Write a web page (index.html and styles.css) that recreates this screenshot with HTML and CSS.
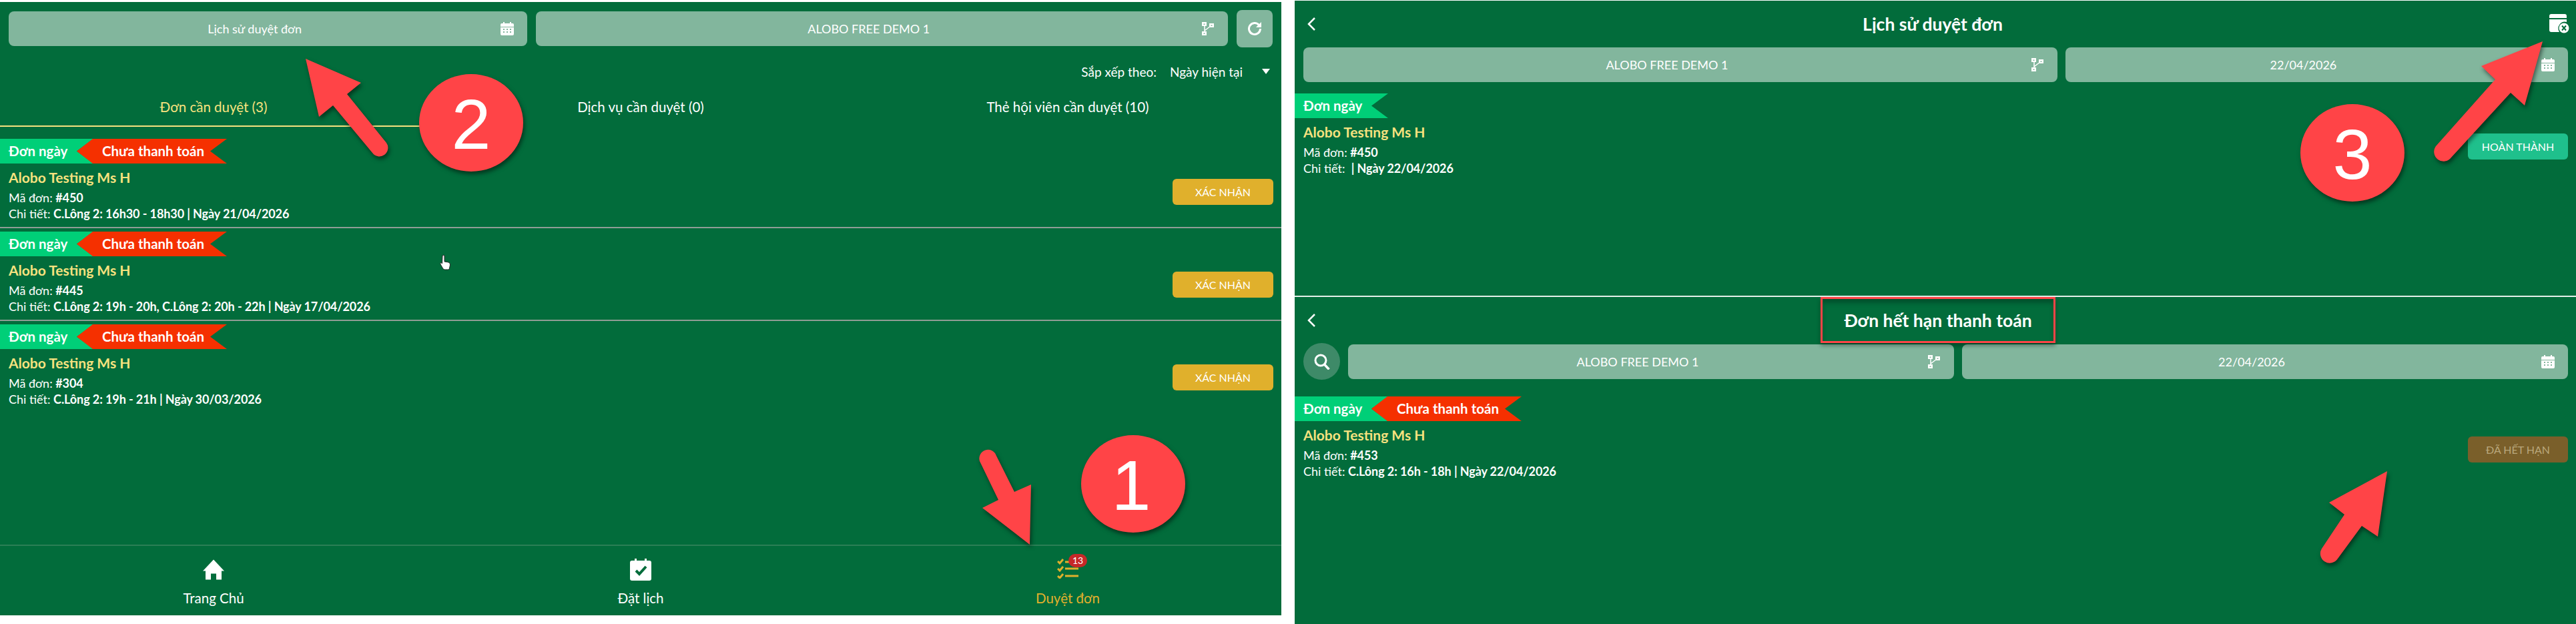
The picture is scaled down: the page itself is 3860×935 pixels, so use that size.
FILE: index.html
```html
<!DOCTYPE html>
<html lang="vi">
<head>
  <meta charset="UTF-8">
  <meta name="viewport" content="width=device-width, initial-scale=1.0">
  <title>Duyệt đơn</title>
  <link rel="stylesheet" href="styles.css">
</head>
<body>
  <svg class="icon-defs" width="0" height="0">
    <symbol id="ic-calendar" viewBox="0 0 20 20">
      <path fill="#fff" d="M4 0h2v2h8V0h2v2h2a2 2 0 0 1 2 2v3H0V4a2 2 0 0 1 2-2h2zM0 8h20v10a2 2 0 0 1-2 2H2a2 2 0 0 1-2-2z"/>
      <path fill="#82b69d" d="M4 10h2v2H4zM9 10h2v2H9zM14 10h2v2h-2zM4 14h2v2H4zM9 14h2v2H9zM14 14h2v2h-2z"/>
    </symbol>
    <symbol id="ic-branch" viewBox="0 0 18 20">
      <path fill="none" stroke="#fff" stroke-width="1.500" d="M4 3v14M4 13l9-7"/>
      <path fill="#fff" d="M0 0h7v6H0zM11 2h7v6h-7zM0 14h7v6H0z"/>
      <path fill="#82b69d" d="M2.500 2.500h2v1.500h-2zM13.500 4.500h2V6h-2zM2.500 16.500h2V18h-2z"/>
    </symbol>
  </svg>

  <main class="panel panel-left">
    <div class="toolbar">
      <div class="picker">
        <span class="picker-text">Lịch sử duyệt đơn</span>
        <svg class="picker-icon"><use href="#ic-calendar"/></svg>
      </div>
      <div class="picker">
        <span class="picker-text">ALOBO FREE DEMO 1</span>
        <svg class="picker-icon"><use href="#ic-branch"/></svg>
      </div>
      <div class="refresh">
        <svg width="22" height="22" viewBox="0 0 22 22">
          <path fill="none" stroke="#fff" stroke-width="3" d="M17.500 5.500A8.500 8.500 0 1 0 19.500 11"/>
          <path fill="#fff" d="M21 1v8h-8z"/>
        </svg>
      </div>
    </div>

    <div class="sort">
      <span>Sắp xếp theo:</span>
      <span class="sort-value">Ngày hiện tại</span>
      <span class="caret"></span>
    </div>

    <div class="tabs">
      <div class="tab tab-active">Đơn cần duyệt (3)</div>
      <div class="tab">Dịch vụ cần duyệt (0)</div>
      <div class="tab">Thẻ hội viên cần duyệt (10)</div>
    </div>

    <div class="orders">
      <div class="order order-first">
        <div>
          <div class="tags">
            <span class="tag tag-green">Đơn ngày</span>
            <span class="tag tag-red">Chưa thanh toán</span>
          </div>
          <div class="order-name">Alobo Testing Ms H</div>
          <div class="order-line order-code">Mã đơn: <b>#450</b></div>
          <div class="order-line">Chi tiết: <b>C.Lông 2: 16h30 - 18h30 | Ngày 21/04/2026</b></div>
        </div>
        <button class="action action-confirm">XÁC NHẬN</button>
      </div>
      <div class="order">
        <div>
          <div class="tags">
            <span class="tag tag-green">Đơn ngày</span>
            <span class="tag tag-red">Chưa thanh toán</span>
          </div>
          <div class="order-name">Alobo Testing Ms H</div>
          <div class="order-line order-code">Mã đơn: <b>#445</b></div>
          <div class="order-line">Chi tiết: <b>C.Lông 2: 19h - 20h, C.Lông 2: 20h - 22h | Ngày 17/04/2026</b></div>
        </div>
        <button class="action action-confirm">XÁC NHẬN</button>
      </div>
      <div class="order">
        <div>
          <div class="tags">
            <span class="tag tag-green">Đơn ngày</span>
            <span class="tag tag-red">Chưa thanh toán</span>
          </div>
          <div class="order-name">Alobo Testing Ms H</div>
          <div class="order-line order-code">Mã đơn: <b>#304</b></div>
          <div class="order-line">Chi tiết: <b>C.Lông 2: 19h - 21h | Ngày 30/03/2026</b></div>
        </div>
        <button class="action action-confirm">XÁC NHẬN</button>
      </div>
    </div>

    <nav class="bottom-nav">
      <div class="nav-item">
        <svg class="nav-icon" width="32" height="30" viewBox="0 0 32 30">
          <path fill="#fff" d="M16 0l16 17h-4v13h-8V21h-8v9H4V17H0z"/>
        </svg>
        <span>Trang Chủ</span>
      </div>
      <div class="nav-item">
        <svg class="nav-icon" width="32" height="33" viewBox="0 0 32 33">
          <path fill="#fff" d="M7 0h3v3h12V0h3v3h4a3 3 0 0 1 3 3v24a3 3 0 0 1-3 3H3a3 3 0 0 1-3-3V6a3 3 0 0 1 3-3h4z"/>
          <path fill="none" stroke="#026c3b" stroke-width="4" d="M9 18l5 5 10-11"/>
        </svg>
        <span>Đặt lịch</span>
      </div>
      <div class="nav-item nav-item-active">
        <span class="nav-icon nav-badge-wrap">
          <svg width="32" height="30" viewBox="0 0 32 30">
            <g fill="none" stroke="#e0b02c" stroke-width="3">
              <path d="M1 4l3 3 5-6M1 15l3 3 5-6M1 26l3 3 5-6"/>
              <path d="M12 5h20M12 15h20M12 26h20"/>
            </g>
          </svg>
          <span class="nav-badge">13</span>
        </span>
        <span>Duyệt đơn</span>
      </div>
    </nav>
  </main>

  <section class="panel-right">
    <div class="panel history">
      <header class="screen-head">
        <svg width="14" height="20" viewBox="0 0 14 20"><path fill="none" stroke="#fff" stroke-width="2.500" d="M12 1L3 10l9 9"/></svg>
        <h2>Lịch sử duyệt đơn</h2>
        <svg width="30" height="30" viewBox="0 0 30 30">
          <path fill="#fff" d="M0 3a3 3 0 0 1 3-3h20a3 3 0 0 1 3 3v3H0zM0 8h26v4a10 10 0 0 0-11 15H3a3 3 0 0 1-3-3z"/>
          <circle cx="22" cy="21" r="7.500" fill="#fff"/>
          <path stroke="#026c3b" stroke-width="2" d="M19 17.500l6 7M25 17.500l-6 7"/>
        </svg>
      </header>
      <div class="filters">
        <div class="picker">
          <span class="picker-text">ALOBO FREE DEMO 1</span>
          <svg class="picker-icon"><use href="#ic-branch"/></svg>
        </div>
        <div class="picker">
          <span class="picker-text">22/04/2026</span>
          <svg class="picker-icon"><use href="#ic-calendar"/></svg>
        </div>
      </div>
      <div class="order order-plain">
        <div>
          <div class="tags">
            <span class="tag tag-green">Đơn ngày</span>
          </div>
          <div class="order-name">Alobo Testing Ms H</div>
          <div class="order-line order-code">Mã đơn: <b>#450</b></div>
          <div class="order-line">Chi tiết: &nbsp;<b>| Ngày 22/04/2026</b></div>
        </div>
        <button class="action action-done">HOÀN THÀNH</button>
      </div>
    </div>

    <div class="panel expired">
      <header class="screen-head screen-head-low">
        <svg width="14" height="20" viewBox="0 0 14 20"><path fill="none" stroke="#fff" stroke-width="2.500" d="M12 1L3 10l9 9"/></svg>
        <h2>Đơn hết hạn thanh toán</h2>
        <span class="head-spacer"></span>
      </header>
      <div class="filters filters-search">
        <div class="search">
          <svg width="24" height="24" viewBox="0 0 24 24">
            <circle cx="10" cy="10" r="8" fill="none" stroke="#fff" stroke-width="3"/>
            <path stroke="#fff" stroke-width="3.500" d="M15.500 16l7 7.500"/>
          </svg>
        </div>
        <div class="picker">
          <span class="picker-text">ALOBO FREE DEMO 1</span>
          <svg class="picker-icon"><use href="#ic-branch"/></svg>
        </div>
        <div class="picker">
          <span class="picker-text">22/04/2026</span>
          <svg class="picker-icon"><use href="#ic-calendar"/></svg>
        </div>
      </div>
      <div class="order order-plain">
        <div>
          <div class="tags">
            <span class="tag tag-green">Đơn ngày</span>
            <span class="tag tag-red">Chưa thanh toán</span>
          </div>
          <div class="order-name">Alobo Testing Ms H</div>
          <div class="order-line order-code">Mã đơn: <b>#453</b></div>
          <div class="order-line">Chi tiết: <b>C.Lông 2: 16h - 18h | Ngày 22/04/2026</b></div>
        </div>
        <button class="action action-expired">ĐÃ HẾT HẠN</button>
      </div>
    </div>
  </section>

  <!-- Chu thich mau do ve de len anh chup -->
  <div class="note-box"></div>
  <svg class="notes" width="3860" height="935" viewBox="0 0 3860 935">
    <g class="note-shape">
      <path stroke-linejoin="round" d="M458 88L541 124L520 141L579 214A12 12 0 0 1 558 229L499 158L478 175Z"/>
      <path d="M1543 816L1545 726L1520 737L1493 683A13 13 0 0 0 1468 691L1496 749L1472 761Z"/>
      <path d="M3810 62L3718 99L3739 119L3650 219A13 13 0 0 0 3673 236L3762 139L3783 158Z"/>
      <path d="M3577 706L3490 753L3513 771L3479 822A12 12 0 0 0 3503 837L3539 788L3563 804Z"/>
      <ellipse cx="1698" cy="725" rx="78" ry="73"/>
      <ellipse cx="706" cy="184" rx="78" ry="73"/>
      <ellipse cx="3525" cy="229" rx="78" ry="73"/>
    </g>
    <g class="note-num">
      <text x="1695" y="764">1</text>
      <text x="706" y="223">2</text>
      <text x="3525" y="268">3</text>
    </g>
    <path class="hand" d="M663 383q2-1.500 3 0v9l6 1q3 1 2.500 4l-1 5q0 2-2 2h-5q-2 0-3-2l-3.500-6q-1-2 1-2.500l1.500 1.500z"/>
  </svg>
</body>
</html>
```

FILE: styles.css
```css
* {
  box-sizing: border-box;
}

body {
  margin: 0;
  width: 3860px;
  height: 935px;
  overflow: hidden;
  position: relative;
  display: flex;
  background-color: #fff;
  font-family: "Lato", "Noto Sans", sans-serif;
  color: #fff;
}

.icon-defs {
  position: absolute;
}

.panel {
  background-color: #026c3b;
}

.panel-left {
  width: 1920px;
  height: 919px;
  margin-top: 3px;
  display: flex;
  flex-direction: column;
}

.panel-right {
  width: 1920px;
  height: 934px;
  margin-top: 1px;
  margin-left: 20px;
  display: flex;
  flex-direction: column;
}

/* Thanh chon phia tren */
.toolbar {
  display: grid;
  grid-template-columns: 3fr 4fr 54px;
  gap: 13px;
  align-items: center;
  padding: 12px 13px 0;
}

.picker {
  height: 52px;
  display: flex;
  align-items: center;
  padding-right: 20px;
  background-color: #82b69d;
  border-radius: 8px;
  font-size: 18px;
}

.picker-text {
  flex: 1;
  text-align: center;
}

.picker-icon {
  width: 20px;
  height: 20px;
}

.refresh {
  height: 56px;
  display: flex;
  align-items: center;
  justify-content: center;
  background-color: #82b69d;
  border-radius: 8px;
}

.sort {
  height: 24px;
  margin-top: 24px;
  padding-right: 17px;
  display: flex;
  justify-content: flex-end;
  align-items: center;
  font-size: 19px;
}

.sort-value {
  margin-left: 20px;
}

.caret {
  margin-left: 29px;
  border-left: 6px solid transparent;
  border-right: 6px solid transparent;
  border-top: 8px solid #fff;
}

.tabs {
  display: grid;
  grid-template-columns: repeat(3, 1fr);
  margin-top: 26px;
}

.tab {
  height: 45px;
  line-height: 30px;
  text-align: center;
  font-size: 20.500px;
}

.tab-active {
  color: #f7e27f;
  border-bottom: 2px solid #f7e27f;
}

/* Danh sach don */
.orders {
  flex: 1;
}

.order {
  display: flex;
  justify-content: space-between;
  align-items: flex-start;
  padding: 5px 12px 8px 0;
  border-bottom: 2px solid #8f9d95;
}

.order-first {
  padding-top: 18px;
}

.order:last-child {
  border-bottom: none;
}

.order-plain {
  border-bottom: none;
  padding-top: 0;
}

.tags {
  display: flex;
  height: 37px;
}

.tag {
  height: 37px;
  line-height: 36px;
  font-size: 20.500px;
  font-weight: 700;
}

.tag-green {
  width: 140px;
  padding-left: 13px;
  background-color: #00cf78;
  clip-path: polygon(0 0, 100% 0, calc(100% - 25px) 50%, 100% 100%, 0 100%);
}

.tag-red {
  width: 225px;
  margin-left: -25px;
  padding-left: 38px;
  background-color: #f53000;
  clip-path: polygon(0 50%, 24px 0, 100% 0, calc(100% - 25px) 50%, 100% 100%, 24px 100%);
}

.order-name {
  margin-top: 7px;
  padding-left: 13px;
  line-height: 28px;
  font-size: 21px;
  font-weight: 700;
  color: #f7e27f;
}

.order-line {
  padding-left: 13px;
  line-height: 24px;
  font-size: 18px;
}

.order-code {
  margin-top: 4px;
}

.order-line b {
  font-weight: 700;
  letter-spacing: -0.1px;
}

.action {
  width: 151px;
  height: 39px;
  margin-top: 60px;
  padding: 0;
  border: none;
  border-radius: 6px;
  color: #fff;
  font-family: inherit;
  font-size: 16px;
}

.action-confirm {
  background-color: #e0b02c;
}

.action-done {
  width: 150px;
  background-color: #1fc08c;
}

.action-expired {
  width: 150px;
  background-color: #7a5f2a;
  color: #b9a77c;
}

/* Thanh dieu huong duoi */
.bottom-nav {
  height: 106px;
  display: grid;
  grid-template-columns: repeat(3, 1fr);
  border-top: 2px solid #2b7f55;
}

.nav-item {
  display: flex;
  flex-direction: column;
  align-items: center;
  font-size: 20.500px;
}

.nav-icon {
  height: 33px;
  margin-top: 19px;
  margin-bottom: 14px;
}

.nav-item-active {
  color: #e0b02c;
}

.nav-badge-wrap {
  position: relative;
  display: block;
  width: 32px;
}

.nav-badge {
  position: absolute;
  left: 17px;
  top: -7px;
  width: 28px;
  height: 20px;
  border-radius: 10px;
  background-color: #c62828;
  color: #fff;
  font-size: 14px;
  line-height: 20px;
  text-align: center;
}

/* Man hinh ben phai */
.history {
  height: 442px;
}

.expired {
  flex: 1;
  border-top: 2px solid #e4efe9;
}

.screen-head {
  height: 70px;
  padding: 0 10px 0 18px;
  display: flex;
  align-items: center;
  justify-content: space-between;
}

.screen-head-low {
  height: 69px;
}

.screen-head h2 {
  margin: 0;
  font-size: 26.500px;
  font-weight: 700;
}

.head-spacer {
  width: 14px;
}

.filters {
  display: grid;
  grid-template-columns: 3fr 2fr;
  gap: 12px;
  align-items: center;
  padding: 0 12px 0 13px;
  margin-bottom: 17px;
}

.filters-search {
  grid-template-columns: 55px 1fr 1fr;
  height: 55px;
  margin-bottom: 25px;
}

.search {
  height: 55px;
  display: flex;
  align-items: center;
  justify-content: center;
  border-radius: 50%;
  background-color: #3e8a68;
}

/* Lop chu thich */
.note-box {
  position: absolute;
  left: 2728px;
  top: 445px;
  width: 352px;
  height: 69px;
  border: 3px solid #ff4447;
  box-shadow: 0 4px 6px rgba(0, 0, 0, 0.35), inset 0 6px 6px rgba(0, 0, 0, 0.25);
}

.notes {
  position: absolute;
  left: 0;
  top: 0;
  pointer-events: none;
}

.note-shape {
  fill: #ff4447;
  filter: drop-shadow(2px 4px 3px rgba(0, 0, 0, 0.5));
}

.note-num {
  fill: #fff;
  font-family: "Liberation Sans", sans-serif;
  font-size: 106px;
  text-anchor: middle;
}

.hand {
  fill: #fff;
  stroke: #222;
  stroke-width: 1;
}
```
